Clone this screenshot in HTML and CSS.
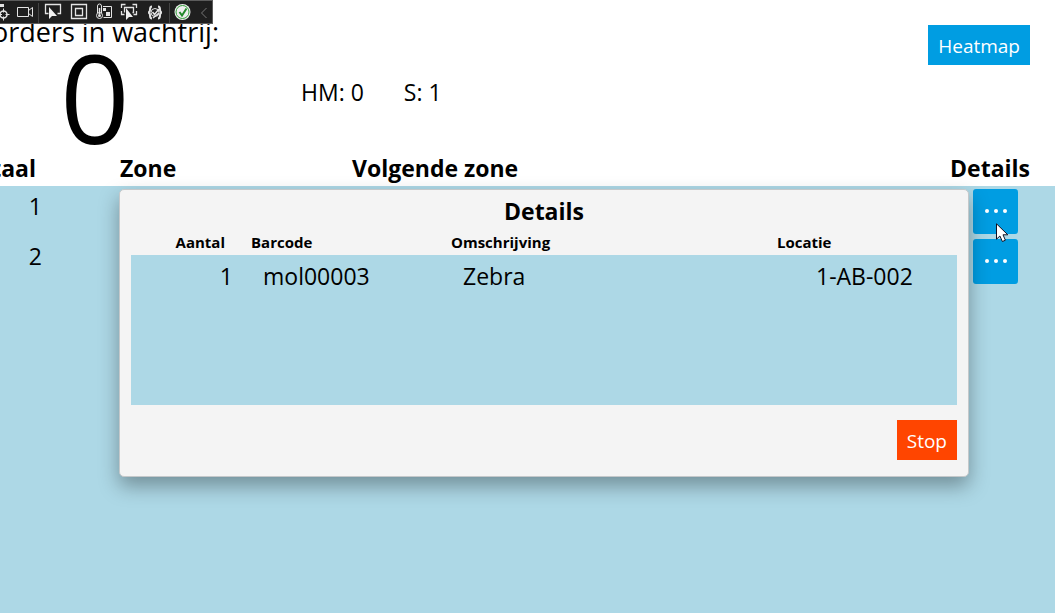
FILE: index.html
```html
<!DOCTYPE html>
<html lang="nl">
<head>
<meta charset="utf-8">
<meta name="viewport" content="width=device-width, initial-scale=1">
<title>Orders</title>
<link rel="stylesheet" href="styles.css">
</head>
<body>
<header class="summary">
  <div class="queue">
    <h1 class="queue-label"><span>orders in wachtrij:</span></h1>
    <div class="queue-count">0</div>
  </div>
  <div class="counters"><span>HM: 0</span><span>S: 1</span></div>
  <button class="button heatmap" type="button">Heatmap</button>
</header>

<main>
  <table class="orders">
    <colgroup><col class="c-total"><col class="c-zone"><col><col class="c-action"></colgroup>
    <thead>
      <tr><th><span class="clip">taal</span></th><th>Zone</th><th>Volgende zone</th><th class="end">Details</th></tr>
    </thead>
    <tbody>
      <tr><td><span class="total">1</span></td><td></td><td></td><td class="action"><button class="more" type="button" aria-label="Details 1"><i></i><i></i><i></i></button></td></tr>
      <tr><td><span class="total">2</span></td><td></td><td></td><td class="action"><button class="more" type="button" aria-label="Details 2"><i></i><i></i><i></i></button></td></tr>
    </tbody>
  </table>
</main>

<section class="dialog" role="dialog" aria-labelledby="dialog-title">
  <h2 class="dialog-title" id="dialog-title">Details</h2>
  <table class="items">
    <colgroup><col class="i-count"><col class="i-code"><col><col class="i-place"></colgroup>
    <thead>
      <tr><th class="count">Aantal</th><th>Barcode</th><th>Omschrijving</th><th>Locatie</th></tr>
    </thead>
    <tbody>
      <tr><td class="count">1</td><td>mol00003</td><td>Zebra</td><td class="place">1-AB-002</td></tr>
    </tbody>
  </table>
  <div class="dialog-actions"><button class="button stop" type="button">Stop</button></div>
</section>

<div class="devbar">
  <svg width="212" height="23" viewBox="0 0 212 23" fill="none" stroke="#e4e4e4" aria-hidden="true">
    <path d="M0 4.500h4" stroke-width="3"/>
    <circle cx="3.500" cy="13.500" r="3.500" stroke-width="1.500"/>
    <path d="M3.500 7.500v4M3.500 15.500v4M-2 13.500h4M5.500 13.500h4"/>
    <path d="M17.500 6.500h11v9h-11zM28.500 9.500l4-3v9l-4-3"/>
    <path d="M38.500 2v20M169.500 2v20" stroke="#444"/>
    <path d="M48.500 12.500h-3v-9h15v9h-3" stroke-width="1.300"/>
    <path d="M49 6v12l3-3 5 0z" fill="#f0f0f0" stroke="none"/>
    <path d="M71.500 3.500h15v14h-15zM75.500 7.500h7v7h-7z" stroke-width="1.300"/>
    <path d="M97.500 12v-7q0-2 2-2t2 2v7"/>
    <circle cx="99.500" cy="14.500" r="3"/>
    <path d="M99.500 7v6" stroke-width="1.500"/><circle cx="99.500" cy="14.500" r="1.500" fill="#e4e4e4" stroke="none"/>
    <path d="M103 5.500h8.500v11h-8"/>
    <path d="M103 7h3v3h-3zM106 11h4v4h-4z" fill="#e4e4e4" stroke="none"/>
    <path d="M121.500 7v-3.500h4M132.500 3.500h4v3.500M121.500 10v3.500h3M136.500 10v3.500h-3M124.500 11.500v-5h9v5h-1" stroke-width="1.300"/>
    <path d="M126 7v12l3-3h4z" fill="#f0f0f0" stroke="none"/>
    <path d="M152 5.500q-2 0-2 3 0 3-2 3 2 0 2 3 0 3 2 3M158 5.500q2 0 2 3 0 3 2 3-2 0-2 3 0 3-2 3" stroke-width="2"/>
    <circle cx="155" cy="11.500" r="4"/>
    <path d="M152.500 11l2 2.500 4.500-5.500M153 17l6-5" stroke-width="1.500"/>
    <circle cx="182.500" cy="11" r="8" fill="#eee" stroke="none"/>
    <circle cx="182.500" cy="11" r="6.500" stroke="#35a03b"/>
    <path d="M179.500 11l2.500 3.500 4.500-7" stroke="#22882a" stroke-width="2"/>
    <path d="M206.500 7l-5 5 5 5" stroke="#777"/>
  </svg>
</div>

<svg class="pointer" width="14" height="20" viewBox="0 0 14 20" aria-hidden="true">
  <path d="M.5.800v15.400l3.400-3.200 2.500 5.500 3-1.300-2.400-5.400h4.800z" fill="#fff" stroke="#112"/>
</svg>
</body>
</html>
```

FILE: styles.css
```css
* { box-sizing: border-box; }

body {
  margin: 0;
  min-height: 100vh;
  position: relative;
  overflow-x: hidden;
  background: #add8e6;
  color: #000;
  font: 23px/30px "Open Sans", "Noto Sans", sans-serif;
}

h1, h2 { margin: 0; }

button {
  border: 0;
  color: #fff;
  background: #009de2;
  font-family: inherit;
}

.summary {
  display: flex;
  align-items: flex-start;
  height: 150px;
  padding-right: 25px;
  background: #fff;
}

.queue { width: 219px; }

.queue-label {
  display: flex;
  justify-content: flex-end;
  padding-top: 16px;
  font-size: 27px;
  line-height: 32px;
  font-weight: 400;
  white-space: nowrap;
}

.queue-count {
  width: 190px;
  font-size: 122px;
  line-height: 98px;
  text-align: center;
}

.counters {
  display: flex;
  gap: 40px;
  padding: 77px 0 0 82px;
}

.button {
  height: 40px;
  padding: 2px 10px 0;
  font-size: 19px;
  line-height: 26px;
}

.heatmap { margin: 25px 0 0 auto; }

table {
  width: 100%;
  table-layout: fixed;
  border-collapse: collapse;
}

th, td {
  padding: 0;
  text-align: left;
  vertical-align: top;
  font-weight: 400;
}

.c-total { width: 120px; }
.c-zone { width: 232px; }
.c-action { width: 160px; }

.orders thead { background: #fff; }

.orders th {
  height: 36px;
  padding-top: 3px;
  font-weight: 700;
}

.orders .end {
  padding-right: 25px;
  text-align: right;
}

.clip {
  display: flex;
  justify-content: flex-end;
  width: 36px;
}

.orders td {
  height: 50px;
  padding-top: 5px;
}

.total {
  display: block;
  width: 42px;
  text-align: right;
}

.orders .action {
  padding: 3px 37px 0 0;
}

.more {
  display: flex;
  align-items: center;
  justify-content: center;
  gap: 5px;
  width: 45px;
  height: 45px;
  margin-left: auto;
  padding: 0 0 2px;
  border-radius: 3px;
}

.more i {
  width: 4px;
  height: 4px;
  border-radius: 50%;
  background: #fff;
}

.dialog {
  position: absolute;
  top: 189px;
  left: 119px;
  right: 86px;
  padding: 6px 11px 16px;
  border: 1px solid #c4c8ca;
  border-radius: 5px;
  background: #f4f4f4;
  box-shadow: 0 9px 20px rgba(0, 0, 0, .34);
}

.dialog-title {
  font-size: 23px;
  line-height: 30px;
  text-align: center;
}

.i-count { width: 120px; }
.i-code { width: 200px; }
.i-place { width: 180px; }

.items th {
  height: 29px;
  padding-top: 6px;
  font-size: 15px;
  line-height: 20px;
  font-weight: 700;
}

.items td {
  height: 150px;
  padding: 6px 0 0 12px;
  background: #add8e6;
}

.items .count { text-align: right; }
.items th.count { padding-right: 26px; }
.items td.count { padding-right: 18px; }
.items td.place { padding-left: 39px; }

.dialog-actions {
  display: flex;
  justify-content: flex-end;
  padding-top: 15px;
}

.stop { background: #ff4500; }

.devbar {
  position: absolute;
  top: 0;
  left: 0;
  height: 24px;
  border: 1px solid #5c5c5c;
  border-left: 0;
  background: #1f1f1f;
}

.devbar svg { display: block; }

.pointer {
  position: absolute;
  top: 223px;
  right: 45px;
}
```
